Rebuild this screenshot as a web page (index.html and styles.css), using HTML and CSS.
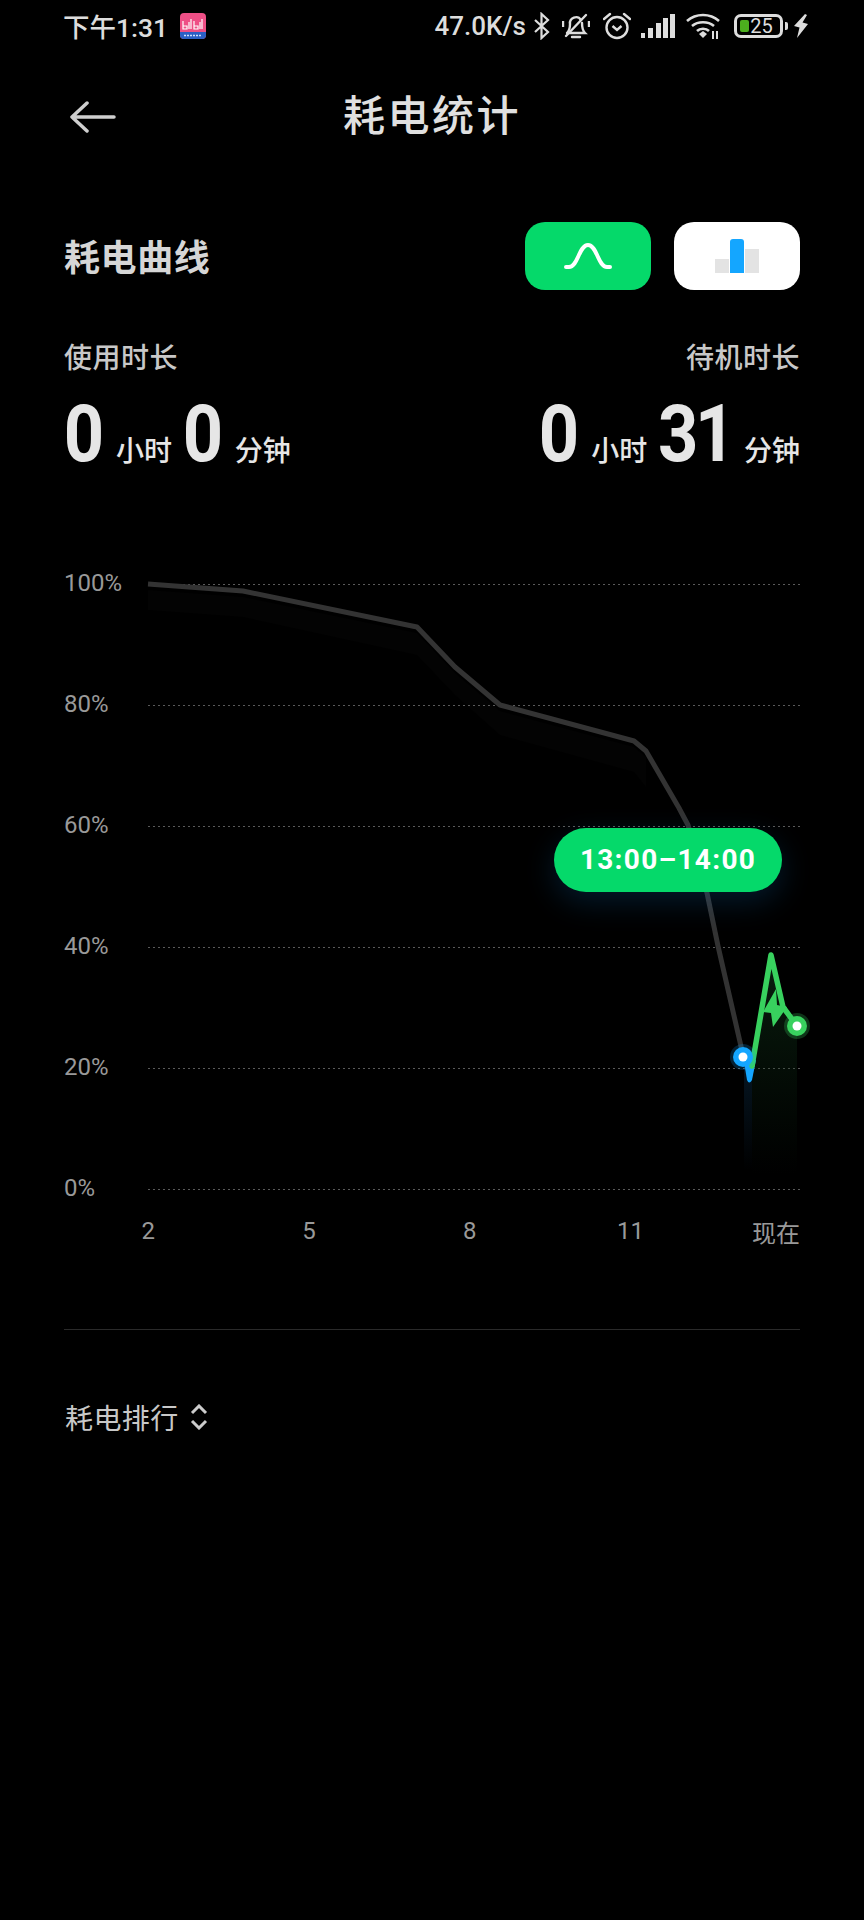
FILE: index.html
```html
<!DOCTYPE html>
<html lang="zh-CN">
<head>
    <meta charset="UTF-8">
    <meta name="viewport" content="width=device-width, initial-scale=1.0">
    <title>耗电统计</title>
    <link rel="stylesheet" href="styles.css">
</head>
<body>
    <!-- 状态栏 -->
    <div class="status-bar">
        <div class="status-left">
            <span class="clock">下午1:31</span>
            <svg class="app-icon" width="26" height="26" viewBox="0 0 26 26">
                <rect width="26" height="26" rx="4" fill="#ee4f86"/>
                <path d="M0 19h26v3a4 4 0 0 1-4 4H4a4 4 0 0 1-4-4z" fill="#2b5fc4"/>
                <path d="M3 8v8h4v-3H3M9 9v7M11 6v10M14 8v8h4v-3h-4M20 9v7M22 6v10" fill="none" stroke="#fff" stroke-width="1.2"/>
                <path d="M4 22.5h18" stroke="#cfe0ff" stroke-width="1.6" stroke-dasharray="2 1"/>
            </svg>
        </div>
        <div class="status-right">
            <span class="speed">47.0K/s</span>
            <svg class="ico-bt" width="18" height="28" viewBox="0 0 18 28"><path d="M2 8l13 12-6.500 6V2L15 8 2 20" fill="none" stroke="#ddd" stroke-width="2.200"/></svg>
            <svg class="ico-bell" width="28" height="28" viewBox="0 0 28 28">
                <path d="M5 21c2-2 3-4 3-9a6 6 0 0 1 11-4M20 11c0 5 1 8 3 10H5M10 25h8" fill="none" stroke="#ddd" stroke-width="2.400" stroke-linecap="round"/>
                <path d="M4 24L24 3" stroke="#ddd" stroke-width="2.400" stroke-linecap="round"/>
                <path d="M1 9v6M27 9v6" stroke="#ddd" stroke-width="2.400"/>
            </svg>
            <svg class="ico-alarm" width="28" height="28" viewBox="0 0 28 28">
                <circle cx="14" cy="15.500" r="10.500" fill="none" stroke="#ddd" stroke-width="2.400"/>
                <path d="M9.500 14l4.500 4 4.500-4" fill="none" stroke="#ddd" stroke-width="2.400"/>
                <path d="M1 7l6-5M27 7l-6-5" stroke="#ddd" stroke-width="2.400" stroke-linecap="round"/>
            </svg>
            <svg class="ico-signal" width="34" height="26" viewBox="0 0 34 26" fill="#ddd">
                <rect x="0" y="20" width="4" height="5"/>
                <rect x="7" y="15" width="5" height="10"/>
                <rect x="15" y="10" width="5" height="15"/>
                <rect x="22" y="5" width="5" height="20"/>
                <rect x="29" y="1" width="5" height="24"/>
            </svg>
            <svg class="ico-wifi" width="36" height="28" viewBox="0 0 36 28">
                <path d="M1 9c9-8 23-8 32 0M6 14c6-5 16-5 22 0M11 19c3-3 9-3 12 0" fill="none" stroke="#ddd" stroke-width="2.600"/>
                <path d="M13 22l4-3 4 3-4 4z" fill="#ddd"/>
                <path d="M27 19v8M31 19v8" stroke="#ddd" stroke-width="2"/>
            </svg>
            <div class="battery">
                <div class="battery-body"><span class="battery-fill"></span><span class="battery-num">25</span></div>
                <span class="battery-nub"></span>
            </div>
            <svg class="ico-bolt" width="14" height="24" viewBox="0 0 14 24"><path d="M11 0L0 12l5.500 1.500L3 24l11-14-5.500-1.500L13 1z" fill="#ddd"/></svg>
        </div>
    </div>

    <!-- 标题栏 -->
    <header class="nav">
        <svg class="back" width="48" height="32" viewBox="0 0 48 32">
            <path d="M45 16H3M18 2L3 16l15 14" fill="none" stroke="#cfcfcf" stroke-width="3.500" stroke-linecap="round" stroke-linejoin="round"/>
        </svg>
        <h1 class="nav-title">耗电统计</h1>
    </header>

    <div class="section-head">
        <h2 class="section-title">耗电曲线</h2>
        <div class="toggle">
            <div class="toggle-btn toggle-green">
                <svg width="50" height="30" viewBox="0 0 50 30"><path d="M3 26h3c9 0 10-22 19-22s10 22 19 22h3" fill="none" stroke="#fff" stroke-width="4" stroke-linecap="round"/></svg>
            </div>
            <div class="toggle-btn toggle-white">
                <svg width="44" height="34" viewBox="0 0 44 34">
                    <rect x="0" y="20" width="14" height="14" fill="#e3e3e3"/>
                    <rect x="30" y="10" width="14" height="24" fill="#e3e3e3"/>
                    <path d="M15 3a3 3 0 0 1 3-3h8a3 3 0 0 1 3 3v31H15z" fill="#14a6ff"/>
                </svg>
            </div>
        </div>
    </div>

    <div class="durations">
        <div class="duration">
            <div class="duration-label">使用时长</div>
            <div class="duration-value"><b>0</b><span>小时</span><b>0</b><span>分钟</span></div>
        </div>
        <div class="duration duration-right">
            <div class="duration-label">待机时长</div>
            <div class="duration-value"><b>0</b><span>小时</span><b class="wide">31</b><span>分钟</span></div>
        </div>
    </div>

    <!-- 曲线图 -->
    <section class="chart">
        <div class="y-row"><span class="y-label">100%</span><i class="y-line"></i></div>
        <div class="y-row"><span class="y-label">80%</span><i class="y-line"></i></div>
        <div class="y-row"><span class="y-label">60%</span><i class="y-line"></i></div>
        <div class="y-row"><span class="y-label">40%</span><i class="y-line"></i></div>
        <div class="y-row"><span class="y-label">20%</span><i class="y-line"></i></div>
        <div class="y-row"><span class="y-label">0%</span><i class="y-line"></i></div>

        <svg class="curve" width="864" height="727" viewBox="0 524 864 727">
            <defs>
                <linearGradient id="greenFade" x1="0" y1="0" x2="0" y2="1">
                    <stop offset="0" stop-color="#123a1c" stop-opacity=".55"/>
                    <stop offset="1" stop-color="#0c2a14" stop-opacity="0"/>
                </linearGradient>
                <linearGradient id="blueFade" x1="0" y1="0" x2="0" y2="1">
                    <stop offset="0" stop-color="#0f3a5c" stop-opacity=".4"/>
                    <stop offset="1" stop-color="#0f3a5c" stop-opacity="0"/>
                </linearGradient>
            </defs>
            <path d="M148 590L243 597L417 633L455 673L500 711L634 747L646 757V787L634 772L500 735L455 695L417 655L243 617L148 610z" fill="#fff" fill-opacity=".012"/>
            <path d="M744 1058H752V1170H744z" fill="url(#blueFade)"/>
            <path d="M752 1066L763 1000L771 953L783 1007L797 1026V1175H752z" fill="url(#greenFade)"/>
            <path d="M148 584L243 591L417 627L455 667L500 705L634 741L646 751L679 808L688 825L707 893L718 946L743 1055" fill="none" stroke="#333" stroke-width="5" stroke-linejoin="round"/>
            <path d="M744 1062L756 1060L752 1080Q749 1085 747 1080z" fill="#14a6ff"/>
            <path d="M752 1066L771 955L783 1007L797 1026" fill="none" stroke="#38d15e" stroke-width="5.500" stroke-linejoin="round" stroke-linecap="round"/>
            <path d="M763 1012L776 989L777 1005L787 1007L773 1027L771 1013z" fill="#38d15e"/>
            <circle cx="743" cy="1057" r="13" fill="#14a6ff" fill-opacity=".2"/>
            <circle cx="743" cy="1057" r="10" fill="#14a6ff"/>
            <circle cx="743" cy="1057" r="4.500" fill="#fff"/>
            <circle cx="797" cy="1026" r="13" fill="#38d15e" fill-opacity=".25"/>
            <circle cx="797" cy="1026" r="10" fill="#38d15e"/>
            <circle cx="797" cy="1026" r="4.500" fill="#fff"/>
        </svg>

        <div class="time-pill">13:00–14:00</div>
    </section>

    <div class="x-axis">
        <span class="x-tick">2</span>
        <span class="x-tick">5</span>
        <span class="x-tick">8</span>
        <span class="x-tick">11</span>
        <span class="x-now">现在</span>
    </div>

    <hr class="divider">

    <div class="rank">
        <span>耗电排行</span>
        <svg width="18" height="26" viewBox="0 0 18 26"><path d="M2 9l7-7 7 7M2 17l7 7 7-7" fill="none" stroke="#ccc" stroke-width="3"/></svg>
    </div>
</body>
</html>
```

FILE: styles.css
```css
* {
    box-sizing: border-box;
}
body {
    margin: 0;
    width: 864px;
    height: 1920px;
    overflow: hidden;
    background: #000;
    color: #ddd;
    font-family: Roboto, "Noto Sans CJK SC", sans-serif;
}

/* 状态栏 */
.status-bar {
    height: 54px;
    padding: 0 56px 2px 63px;
    display: flex;
    justify-content: space-between;
    align-items: center;
}
.status-left, .status-right {
    display: flex;
    align-items: center;
}
.clock {
    margin-bottom: 2px;
    font-size: 26.500px;
    font-weight: 500;
    color: #ddd;
}
.app-icon {
    margin-left: 12px;
}
.speed {
    margin-bottom: 1px;
    font-size: 26px;
    font-weight: 500;
    margin-right: 7px;
}
.ico-bell { margin-left: 11px; }
.ico-alarm { margin-left: 13px; }
.ico-signal { margin-left: 10px; }
.ico-wifi { margin-left: 11px; }
.battery {
    margin-left: 12px;
    display: flex;
    align-items: center;
}
.battery-body {
    position: relative;
    width: 49px;
    height: 24px;
    border: 3px solid #ddd;
    border-radius: 7px;
    text-align: center;
}
.battery-fill {
    position: absolute;
    left: 3px;
    top: 3px;
    width: 9px;
    height: 12px;
    background: #4caf1e;
    border-radius: 2px;
}
.battery-num {
    position: relative;
    font-size: 20px;
    line-height: 18px;
    display: block;
    margin-left: 6px;
    color: #ddd;
}
.battery-nub {
    width: 3px;
    height: 8px;
    margin-left: 2px;
    background: #ddd;
    border-radius: 0 2px 2px 0;
}
.ico-bolt { margin-left: 6px; }

/* 标题栏 */
.nav {
    position: relative;
    height: 124px;
    padding-bottom: 8px;
    display: flex;
    align-items: center;
    justify-content: center;
}
.back {
    position: absolute;
    left: 69px;
    top: 47px;
}
.nav-title {
    margin: 0;
    font-size: 42px;
    font-weight: 500;
    letter-spacing: 2.500px;
    color: #e0e0e0;
}

.section-head {
    margin-top: 44px;
    padding: 0 64px;
    height: 68px;
    display: flex;
    justify-content: space-between;
    align-items: center;
}
.section-title {
    margin: 0 0 3px;
    font-size: 36px;
    font-weight: 700;
    letter-spacing: .6px;
    color: #d6d6d6;
}
.toggle {
    display: flex;
    gap: 23px;
}
.toggle-btn {
    width: 126px;
    height: 68px;
    border-radius: 20px;
    display: flex;
    align-items: center;
    justify-content: center;
}
.toggle-green { background: #05d96a; }
.toggle-white { background: #fff; }

.durations {
    margin-top: 49px;
    padding: 0 64px;
    display: flex;
    justify-content: space-between;
}
.duration-right {
    text-align: right;
}
.duration-label {
    font-size: 28px;
    font-weight: 500;
    letter-spacing: .5px;
    line-height: 40px;
    color: #c8c8c8;
}
.duration-value {
    margin-top: 20px;
    height: 70px;
    display: flex;
    align-items: baseline;
    justify-content: flex-end;
    color: #e6e6e6;
}
/* 数字比 Roboto 窄，横向压一点 */
.duration-value b {
    display: inline-block;
    margin: 0 -3px;
    font-size: 80px;
    font-weight: 700;
    line-height: 70px;
    transform: scaleX(.88);
}
.duration-value b.wide {
    margin: 0 -5px;
    letter-spacing: -4px;
}
.duration-value span {
    font-size: 28px;
    font-weight: 500;
    margin: 0 11px 0 12px;
}
.duration-value span:last-child {
    margin-right: 0;
}

/* 曲线图 */
.chart {
    position: relative;
    margin-top: 55px;
    padding: 0 64px;
}
.y-row {
    height: 121px;
    display: flex;
    align-items: center;
}
.y-label {
    width: 84px;
    margin-bottom: 3px;
    font-size: 24px;
    color: #999;
}
.y-line {
    flex: 1;
    height: 1px;
    background: repeating-linear-gradient(90deg, #5a5a5a 0 2px, transparent 2px 5px);
}
.curve {
    position: absolute;
    left: 0;
    top: 0;
}
.time-pill {
    position: absolute;
    left: 554px;
    top: 304px;
    width: 228px;
    height: 64px;
    border-radius: 32px;
    background: #05d96a;
    box-shadow: 0 10px 30px rgba(20, 120, 200, .22);
    color: #fff;
    font-size: 28px;
    font-weight: 700;
    line-height: 64px;
    text-align: center;
    letter-spacing: 1.300px;
}

.x-axis {
    position: relative;
    margin-top: -36px;
    padding: 0 64px 0 68px;
    height: 34px;
    display: flex;
    align-items: center;
    font-size: 24px;
    color: #999;
}
.x-tick {
    flex: none;
    width: 160.700px;
    text-align: center;
}
.x-now {
    flex: none;
    margin-left: auto;
}

.divider {
    margin: 81px 64px 0;
    border: 0;
    border-top: 1px solid #2a2a2a;
}

.rank {
    margin-top: 67px;
    padding: 0 65px;
    display: flex;
    align-items: center;
    gap: 11px;
    font-size: 28px;
    letter-spacing: .4px;
    color: #c8c8c8;
}
```
